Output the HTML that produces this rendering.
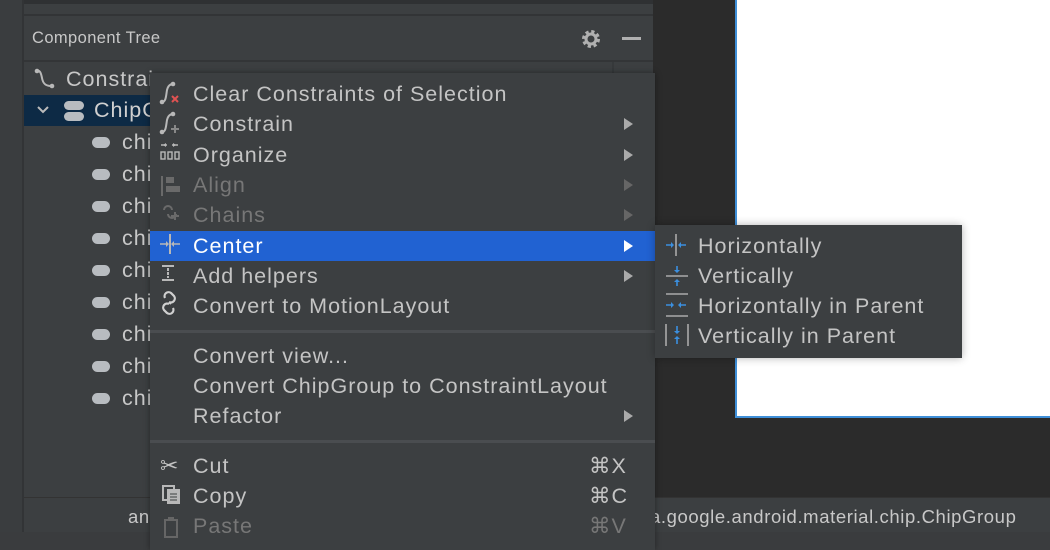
<!DOCTYPE html>
<html><head><style>
*{margin:0;padding:0;box-sizing:border-box}
body{width:1050px;height:550px;overflow:hidden;background:#2b2b2b;font-family:"Liberation Sans",sans-serif;position:relative;color:#c4c4c4}
.a{position:absolute}
.t{position:absolute;font-size:21.5px;letter-spacing:1px;line-height:30px;white-space:nowrap}
.ar{position:absolute;width:0;height:0;border-top:6px solid transparent;border-bottom:6px solid transparent;border-left:9px solid #aaa}
</style></head><body>
<div class="a" style="left:0;top:0;width:24px;height:550px;background:#3a3d3f"></div>
<div class="a" style="left:22px;top:0;width:2px;height:550px;background:#323436"></div>
<div class="a" style="left:24px;top:0;width:629px;height:497px;background:#3c3f41"></div>
<div class="a" style="left:24px;top:0;width:629px;height:4px;background:#2f3133"></div>
<div class="a" style="left:24px;top:14px;width:629px;height:2px;background:#323436"></div>
<div class="a" style="left:24px;top:60px;width:629px;height:2px;background:#333537"></div>
<div class="a" style="left:612px;top:62px;width:2px;height:435px;background:#36393b"></div>
<div class="a" style="left:32px;top:29px;font-size:16.5px;letter-spacing:0.4px;color:#c8c8c8">Component Tree</div>
<svg class="a" style="left:580px;top:28px" width="22" height="22" viewBox="0 0 22 22"><circle cx="11" cy="11" r="7" fill="none" stroke="#b0b0b0" stroke-width="4" stroke-dasharray="3 2.5"/><circle cx="11" cy="11" r="5" fill="none" stroke="#b0b0b0" stroke-width="3"/></svg>
<div class="a" style="left:622px;top:37px;width:19px;height:3px;background:#b0b0b0"></div>
<svg class="a" style="left:34px;top:68px" width="24" height="22"><path d="M3 3 C6 2,7 5,8 10 C9 16,12 18,17 18" fill="none" stroke="#b8b8b8" stroke-width="2"/><circle cx="3" cy="3" r="2.3" fill="#b8b8b8"/><circle cx="18" cy="18" r="2.3" fill="#b8b8b8"/></svg>
<div class="t" style="left:66px;top:64px;color:#c8c8c8">Constrai</div>
<div class="a" style="left:24px;top:95px;width:129px;height:31px;background:#0d2a45"></div>
<svg class="a" style="left:36px;top:103px" width="14" height="14"><path d="M2 4 L7 9 L12 4" fill="none" stroke="#bbb" stroke-width="2"/></svg>
<div class="a" style="left:64px;top:101px;width:20px;height:9px;border-radius:5px;background:#b8bcc0"></div>
<div class="a" style="left:64px;top:112px;width:20px;height:9px;border-radius:5px;background:#b8bcc0"></div>
<div class="t" style="left:94px;top:95px;color:#d0d0d0">ChipG</div>
<div id="chips"></div>
<script>
var h='';for(var i=0;i<9;i++){var y=142+i*32;h+='<div class="a" style="left:92px;top:'+(y-5)+'px;width:18px;height:11px;border-radius:6px;background:#b8bcc0"></div><div class="t" style="left:122px;top:'+(y-15)+'px;color:#c8c8c8">chi</div>';}
document.getElementById('chips').outerHTML=h;
</script>
<div class="a" style="left:735px;top:0;width:315px;height:418px;background:#fff;border-left:2px solid #3f8fd8;border-bottom:2px solid #3f8fd8"></div>
<div class="a" style="left:24px;top:497px;width:1026px;height:35px;background:#3c3f41;border-top:1px solid #333"></div>
<div class="a" style="left:0;top:532px;width:1050px;height:18px;background:#3a3c3e"></div>
<div class="a" style="left:128px;top:506px;font-size:18.5px;letter-spacing:0.6px;color:#c8c8c8">an</div>
<div class="a" style="left:650px;top:506px;font-size:18.5px;letter-spacing:0.6px;color:#c8c8c8">a.google.android.material.chip.ChipGroup</div>
<div class="a" style="left:150px;top:73px;width:505px;height:477px;background:#3c3f41;box-shadow:0 0 6px rgba(0,0,0,.4)"></div>
<div class="a" style="left:150px;top:231px;width:505px;height:30px;background:#2162d2"></div>
<div class="a" style="left:150px;top:330px;width:505px;height:3px;background:#4a4d50"></div>
<div class="a" style="left:150px;top:440px;width:505px;height:3px;background:#4a4d50"></div>
<svg class="a" style="left:158px;top:80px" width="30" height="300">
<g fill="none" stroke="#b8b8b8" stroke-width="2">
<path d="M4 22 C8 22,8 16,9 10 C10 6,12 4,15 4"/><path d="M4 52 C8 52,8 46,9 40 C10 36,12 34,15 34"/>
<path d="M3 65 h6 M14 65 h6" stroke-width="1.6"/>
<rect x="3" y="72" width="4" height="7" stroke-width="1.4"/><rect x="10" y="72" width="4" height="7" stroke-width="1.4"/><rect x="17" y="72" width="4" height="7" stroke-width="1.4"/>
<path d="M4 96 v20" stroke="#6a6a6a"/>
<path d="M10 188 v10 M10 189 v8" stroke-dasharray="2 2"/>
<path d="M4 186 h12 M4 200 h12" />
</g>
<circle cx="15" cy="4" r="2.3" fill="#b8b8b8"/><circle cx="4" cy="22" r="2.3" fill="#b8b8b8"/>
<circle cx="15" cy="34" r="2.3" fill="#b8b8b8"/><circle cx="4" cy="52" r="2.3" fill="#b8b8b8"/>
<path d="M14 16 l6 6 M20 16 l-6 6" stroke="#e05252" stroke-width="2"/>
<path d="M17 45 v8 M13 49 h8" stroke="#888" stroke-width="2"/>
<path d="M15 63 l3 2 l-3 2z M8 63 l-3 2 l3 2z" fill="#b8b8b8"/>
<rect x="8" y="97" width="8" height="6" fill="#6a6a6a"/><rect x="8" y="106" width="14" height="6" fill="#6a6a6a"/>
<path d="M6 130 a4 4 0 0 1 8 0 M10 134 a4 4 0 0 0 8 0 M17 132 v8 M13 136 h8" fill="none" stroke="#6a6a6a" stroke-width="2"/>
<path d="M12 154 v20" stroke="#b8b8b8" stroke-width="2"/>
<path d="M2 164 h6 M16 164 h6" stroke="#b8b8b8" stroke-width="1.6"/>
<path d="M8 161 l3 3 l-3 3z M16 161 l-3 3 l3 3z" fill="#b8b8b8"/>
<path d="M7 218 a4 4 0 0 1 6 -5 l3 3 a4 4 0 0 1 -5 6 M15 228 a4 4 0 0 1 -6 5 l-3 -3 a4 4 0 0 1 5 -6 M11 222 l2 2" fill="none" stroke="#d0d0d0" stroke-width="2.2"/>
</svg>
<div class="t" style="left:193px;top:79px">Clear Constraints of Selection</div>
<div class="t" style="left:193px;top:109px">Constrain</div>
<div class="t" style="left:193px;top:140px">Organize</div>
<div class="t" style="left:193px;top:170px;color:#777">Align</div>
<div class="t" style="left:193px;top:200px;color:#777">Chains</div>
<div class="t" style="left:193px;top:231px;color:#fff">Center</div>
<div class="t" style="left:193px;top:261px">Add helpers</div>
<div class="t" style="left:193px;top:291px">Convert to MotionLayout</div>
<div class="t" style="left:193px;top:341px">Convert view...</div>
<div class="t" style="left:193px;top:371px">Convert ChipGroup to ConstraintLayout</div>
<div class="t" style="left:193px;top:401px">Refactor</div>
<div class="t" style="left:193px;top:451px">Cut</div>
<div class="t" style="left:193px;top:481px">Copy</div>
<div class="t" style="left:193px;top:511px;color:#777">Paste</div>
<div class="t" style="left:589px;top:451px">⌘X</div>
<div class="t" style="left:589px;top:481px">⌘C</div>
<div class="t" style="left:589px;top:511px;color:#777">⌘V</div>
<div class="t" style="left:160px;top:451px;font-size:22px">✂</div>
<svg class="a" style="left:161px;top:484px" width="24" height="60"><rect x="2" y="2" width="11" height="14" fill="none" stroke="#b8b8b8" stroke-width="2"/><rect x="6" y="5" width="13" height="15" fill="#b8b8b8"/><path d="M9 10h7M9 13h7M9 16h7" stroke="#3c3f41"/><rect x="4" y="36" width="12" height="17" fill="none" stroke="#666" stroke-width="2"/><rect x="7" y="33" width="6" height="4" fill="#666"/></svg>
<div class="ar" style="left:624px;top:118px"></div>
<div class="ar" style="left:624px;top:149px"></div>
<div class="ar" style="left:624px;top:179px;border-left-color:#666"></div>
<div class="ar" style="left:624px;top:209px;border-left-color:#666"></div>
<div class="ar" style="left:624px;top:240px;border-left-color:#fff"></div>
<div class="ar" style="left:624px;top:270px"></div>
<div class="ar" style="left:624px;top:410px"></div>
<div class="a" style="left:655px;top:225px;width:307px;height:133px;background:#3c3f41;box-shadow:0 0 8px rgba(0,0,0,.3)"></div>
<svg class="a" style="left:664px;top:232px" width="30" height="120">
<g stroke="#aaa" stroke-width="1.6"><path d="M12 2v22"/><path d="M2 44h22"/><path d="M2 62h22M2 84h22"/><path d="M2 92v22M24 92v22"/></g>
<g stroke="#3b8fdf" stroke-width="1.6"><path d="M2 13h5M17 13h5M13 34v4M13 50v4M2 73h5M17 73h5M13 94v5M13 107v5"/></g>
<g fill="#3b8fdf"><path d="M7 10l3 3l-3 3zM17 10l-3 3l3 3zM10 38l3 3l3-3zM10 50l3-3l3 3zM7 70l3 3l-3 3zM17 70l-3 3l3 3zM10 99l3 3l3-3zM10 107l3-3l3 3z"/></g>
</svg>
<div class="t" style="left:698px;top:231px">Horizontally</div>
<div class="t" style="left:698px;top:261px">Vertically</div>
<div class="t" style="left:698px;top:291px">Horizontally in Parent</div>
<div class="t" style="left:698px;top:321px">Vertically in Parent</div>
</body></html>
